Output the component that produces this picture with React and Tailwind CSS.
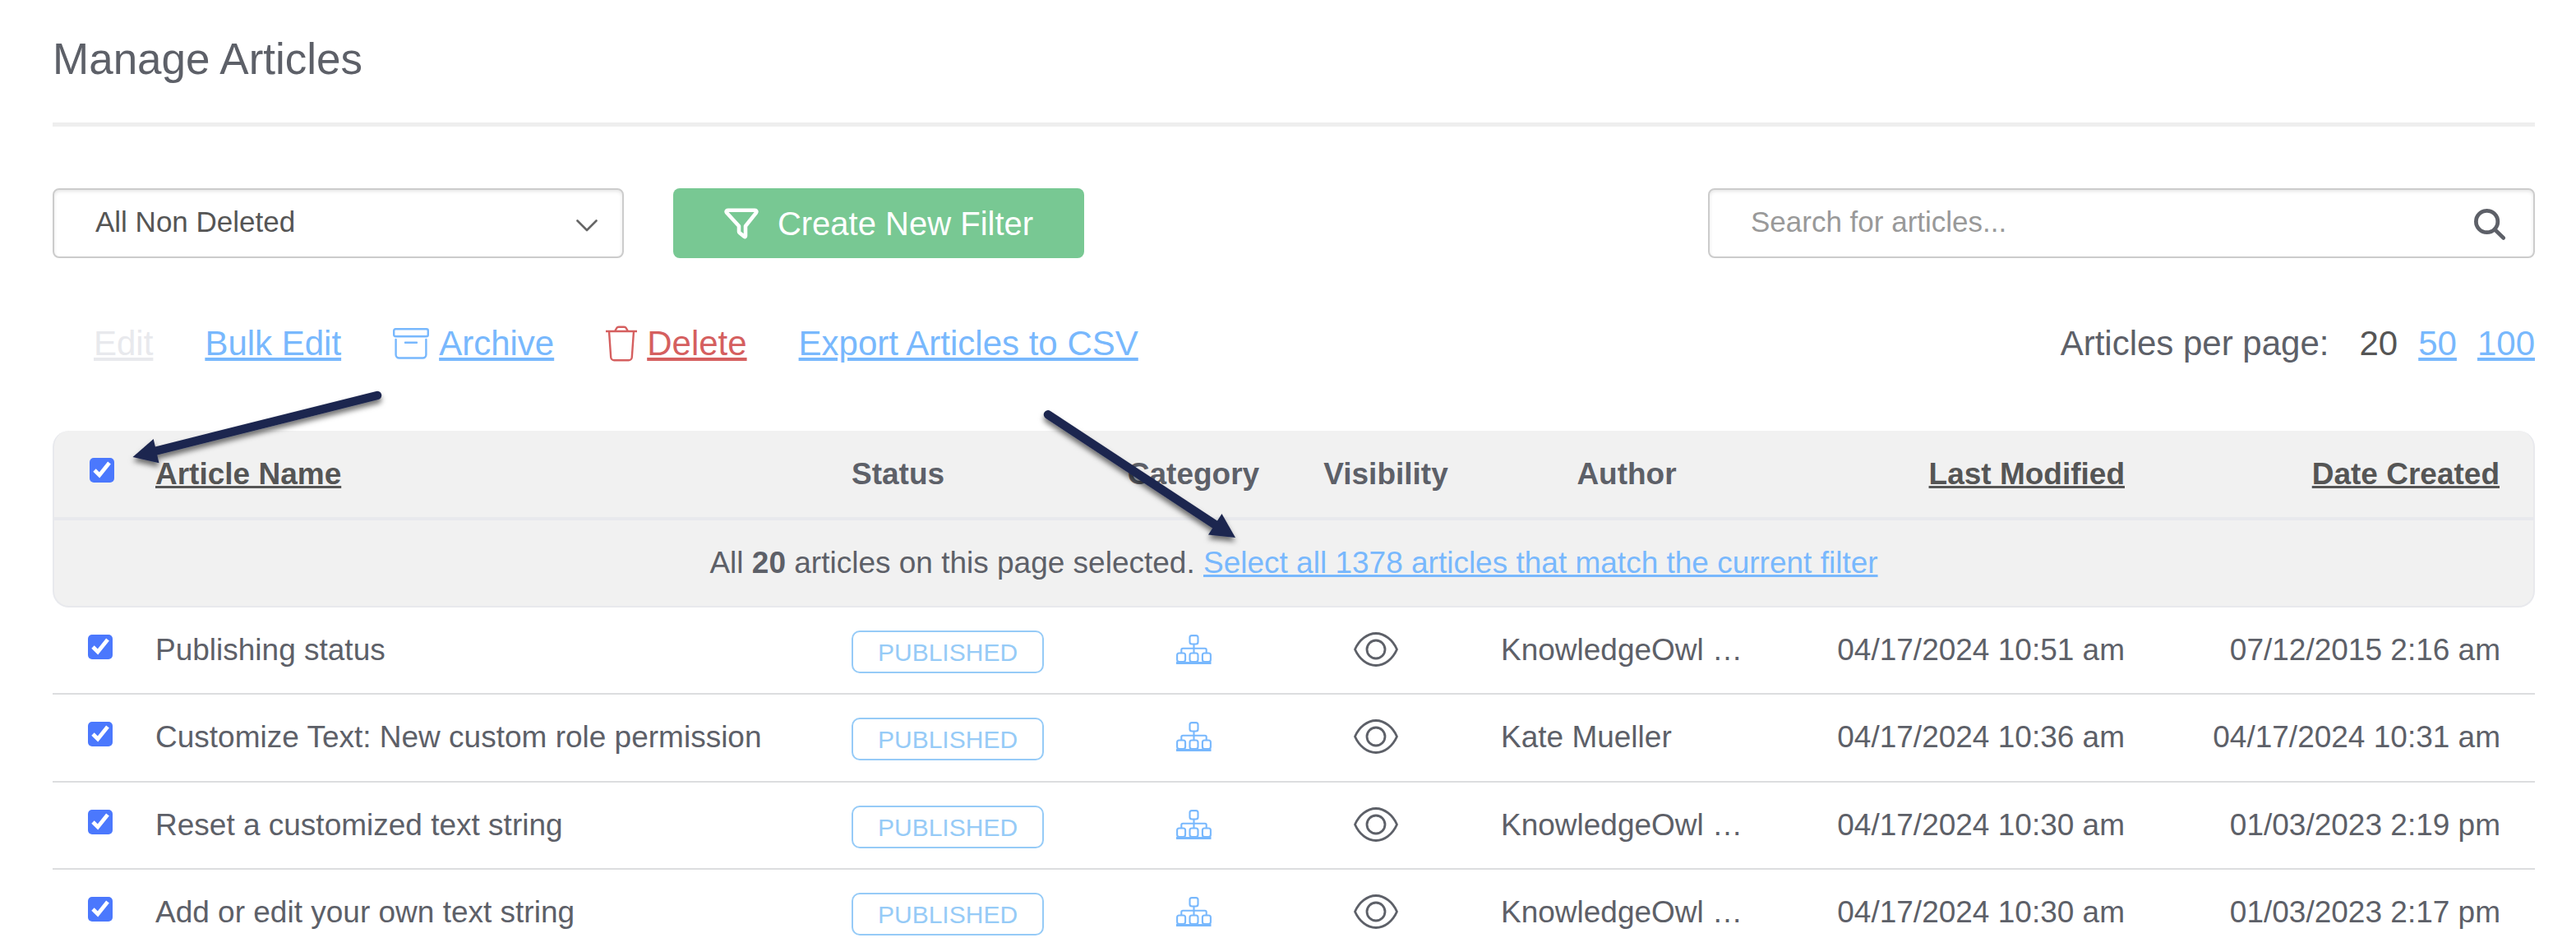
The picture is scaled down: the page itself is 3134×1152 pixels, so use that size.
import React from "react";

const articles = [
  { name: "Publishing status", author: "KnowledgeOwl …", modified: "04/17/2024 10:51 am", created: "07/12/2015 2:16 am" },
  { name: "Customize Text: New custom role permission", author: "Kate Mueller", modified: "04/17/2024 10:36 am", created: "04/17/2024 10:31 am" },
  { name: "Reset a customized text string", author: "KnowledgeOwl …", modified: "04/17/2024 10:30 am", created: "01/03/2023 2:19 pm" },
  { name: "Add or edit your own text string", author: "KnowledgeOwl …", modified: "04/17/2024 10:30 am", created: "01/03/2023 2:17 pm" },
];

const linkBlue = "text-[#78b8fd] underline";

function FilterIcon() {
  return (
    <svg viewBox="0 0 42 38" className="h-[38px] w-[42px]" fill="none" stroke="currentColor" strokeWidth="4.600" strokeLinejoin="round" aria-hidden="true">
      <path d="M4.500 2.800h33c1.800 0 2.400 1.700 1.400 3L26 22v12.300c0 .8-.8 1-1.400.6l-5.800-4.600c-.5-.4-.8-.9-.8-1.500V22L3.100 5.800c-1-1.300-.4-3 1.400-3z" />
    </svg>
  );
}

function SearchIcon() {
  return (
    <svg viewBox="0 0 40 40" className="h-10 w-10" fill="none" stroke="currentColor" aria-hidden="true">
      <circle cx="17.600" cy="17.500" r="13.200" strokeWidth="4.800" />
      <path d="M27 27 37.800 37.500" strokeWidth="4.600" strokeLinecap="round" />
    </svg>
  );
}

function ArchiveIcon() {
  return (
    <svg viewBox="0 0 44 40" className="h-10 w-11" fill="none" stroke="currentColor" strokeWidth="2.400" strokeLinecap="round" aria-hidden="true">
      <rect x="1.200" y="2.200" width="41.600" height="9" rx="2" />
      <path d="M3.600 15v18.500a4 4 0 0 0 4 4h28.800a4 4 0 0 0 4-4V15M15 18.700h14" />
    </svg>
  );
}

function TrashIcon() {
  return (
    <svg viewBox="0 0 38 46" className="h-[46px] w-[38px]" fill="none" stroke="currentColor" strokeWidth="2.400" strokeLinejoin="round" aria-hidden="true">
      <path d="M0 8h38M4 8l2.200 31.500a4 4 0 0 0 4 3.700h17.600a4 4 0 0 0 4-3.700L34 8M11 8l2.300-4c.5-.9 1.300-1.300 2.300-1.300h6.800c1 0 1.800.4 2.300 1.300L27 8" />
    </svg>
  );
}

function SitemapIcon() {
  return (
    <svg viewBox="0 0 43 36" className="h-9 w-[43px]" fill="none" stroke="currentColor" strokeWidth="2.100" aria-hidden="true">
      <rect x="16.500" y="1.100" width="10" height="10.400" rx="2.500" />
      <path d="M21.500 11.500v11M6.300 22.500v-4c0-1 .8-1.800 1.800-1.800h26.800c1 0 1.800.8 1.800 1.800v4" />
      <rect x="1.100" y="22.500" width="10" height="10.500" rx="2.500" />
      <rect x="16.500" y="22.500" width="10" height="10.500" rx="2.500" />
      <rect x="31.900" y="22.500" width="10" height="10.500" rx="2.500" />
      <path d="M0 34.500h42.500" strokeWidth="3" />
    </svg>
  );
}

function EyeIcon() {
  return (
    <svg viewBox="0 0 54 42" className="h-[42px] w-[54px]" fill="none" stroke="currentColor" strokeWidth="2.800" strokeLinejoin="round" aria-hidden="true">
      <path d="M1.500 21C6.500 9.500 16.500 1.500 27 1.500S47.500 9.500 52.500 21C47.500 32.500 37.500 40.500 27 40.500S6.500 32.500 1.500 21z" />
      <circle cx="27" cy="21" r="11" />
    </svg>
  );
}

function Arrows() {
  return (
    <svg viewBox="0 0 1600 700" className="pointer-events-none absolute top-0 left-0 h-[700px] w-[1600px]" fill="#1c264f" stroke="#1c264f" aria-hidden="true">
      <defs>
        <filter id="arrow-shadow" x="-10%" y="-20%" width="120%" height="150%">
          <feDropShadow dx="0" dy="5" stdDeviation="3" floodColor="#000" floodOpacity="0.550" />
        </filter>
      </defs>
      <g filter="url(#arrow-shadow)">
        <path d="M459 481 188 549" strokeWidth="10.500" strokeLinecap="round" />
        <path d="M161.500 556 186.700 534 193.500 563.300z" stroke="none" />
      </g>
      <g filter="url(#arrow-shadow)">
        <path d="M1275 504.300 1478 638" strokeWidth="10.500" strokeLinecap="round" />
        <path d="M1503 654 1486.500 625 1470 650.500z" stroke="none" />
      </g>
    </svg>
  );
}

function Check({ label }) {
  return <input type="checkbox" defaultChecked aria-label={label} className="block size-[30px] accent-[#4b78fd] [clip-path:inset(0_round_5px)]" />;
}

const head = "h-[109px] border-b-4 border-[#e8e9ed] bg-[#f1f1f1] p-0 pt-[31px] align-top font-bold";
const cell = "border-b-2 border-[#dcdddf] p-0 pt-[30px] align-top";

export default function App() {
  return (
    <main className="relative h-screen overflow-hidden bg-white pr-[50px] pl-16 font-['Liberation_Sans',Arial,sans-serif] text-[37px] leading-[44px] text-[#5d6068]">
      <h1 className="pt-[42px] text-[53px] leading-[60px]">Manage Articles</h1>
      <hr className="mt-[47px] border-0 border-t-[5px] border-[#eee]" />

      <form className="mt-[75px] flex items-stretch" onSubmit={(e) => e.preventDefault()}>
        <div className="relative h-[85px] w-[695px]">
          <select aria-label="Article filter" className="h-full w-full appearance-none rounded-lg border-2 border-[#ccc] bg-white pr-20 pb-1 pl-[50px] text-[35px] text-[#555] shadow-[inset_0_2px_4px_rgba(0,0,0,0.1)]">
            <option>All Non Deleted</option>
          </select>
          <svg viewBox="0 0 26 15" className="pointer-events-none absolute top-[38px] right-8 h-[15px] w-[26px]" fill="none" stroke="#666" strokeWidth="2.600" strokeLinecap="round" strokeLinejoin="round" aria-hidden="true">
            <path d="M1.500 1.500 13 13 24.500 1.500" />
          </svg>
        </div>
        <button type="button" className="ml-[60px] flex w-[500px] items-center justify-center gap-[23px] rounded-lg bg-[#78c893] text-[40px] text-white">
          <FilterIcon />
          <span>Create New Filter</span>
        </button>
        <div className="ml-auto flex w-[1006px] items-center rounded-lg border-2 border-[#ccc] pr-[34px] pl-[50px] shadow-[inset_0_2px_4px_rgba(0,0,0,0.1)]">
          <input type="text" aria-label="Search for articles" placeholder="Search for articles..." className="min-w-0 flex-1 pb-1 text-[35px] outline-none placeholder:text-[#999]" />
          <button type="submit" aria-label="Search"><SearchIcon /></button>
        </div>
      </form>

      <div className="mt-20 flex items-center justify-between text-[42px] leading-[48px]">
        <nav className="flex items-center gap-[63px] pl-[50px]" aria-label="Article actions">
          <a href="#edit" className="text-[#e8e9ed] underline">Edit</a>
          <a href="#bulk-edit" className={linkBlue}>Bulk Edit</a>
          <span className="flex items-center gap-3 text-[#78b8fd]">
            <ArchiveIcon />
            <a href="#archive" className="underline">Archive</a>
          </span>
          <span className="flex items-center gap-3 text-[#d55f5f]">
            <TrashIcon />
            <a href="#delete" className="underline">Delete</a>
          </span>
          <a href="#export" className={linkBlue}>Export Articles to CSV</a>
        </nav>
        <div className="flex gap-[25px]">
          <span className="pr-3">Articles per page:</span>
          <span className="text-[#555]">20</span>
          <a href="#50" className={linkBlue}>50</a>
          <a href="#100" className={linkBlue}>100</a>
        </div>
      </div>

      <table className="mt-[82px] w-full table-fixed border-separate border-spacing-0 text-left">
        <colgroup>
          <col className="w-[125px]" />
          <col />
          <col className="w-[330px]" />
          <col className="w-[172px]" />
          <col className="w-[288px]" />
          <col className="w-[306px]" />
          <col className="w-[453px]" />
          <col className="w-[499px]" />
        </colgroup>
        <thead>
          <tr>
            <th className="h-[109px] rounded-tl-[20px] border-b-4 border-l-2 border-[#e8e9ed] bg-[#f1f1f1] p-0 pt-[33px] pl-[43px] align-top"><Check label="Select all articles on this page" /></th>
            <th className={head}><a href="#name" className="text-[#555] underline">Article Name</a></th>
            <th className={head}>Status</th>
            <th className={head + " text-center"}>Category</th>
            <th className={head + " text-center"}><span className="pl-2">Visibility</span></th>
            <th className={head + " text-center"}>Author</th>
            <th className={head + " text-right"}><a href="#modified" className="text-[#555] underline">Last Modified</a></th>
            <th className="h-[109px] rounded-tr-[20px] border-r-2 border-b-4 border-[#e8e9ed] bg-[#f1f1f1] p-0 pt-[31px] pr-[41px] text-right align-top font-bold"><a href="#created" className="text-[#555] underline">Date Created</a></th>
          </tr>
          <tr>
            <td colSpan={8} className="h-[106px] rounded-b-[20px] border-x-2 border-b-2 border-[#e8e9ed] bg-[#f1f1f1] p-0 pt-[30px] text-center align-top">
              All <b>20</b> articles on this page selected.{" "}
              <a href="#select-all" className={linkBlue}>Select all 1378 articles that match the current filter</a>
            </td>
          </tr>
        </thead>
        <tbody>
          {articles.map((a) => (
            <tr key={a.name} className="h-[106px] even:h-[107px]">
              <td className="border-b-2 border-[#dcdddf] p-0 pt-[33px] pl-[43px] align-top"><Check label={"Select " + a.name} /></td>
              <td className={cell}>{a.name}</td>
              <td className="border-b-2 border-[#dcdddf] p-0 pt-7 align-top">
                <span className="block h-[52px] w-fit rounded-[10px] border-2 border-[#96cbf7] px-[30px] text-[30px] leading-[50px] text-[#96cbf7]">PUBLISHED</span>
              </td>
              <td className="border-b-2 border-[#dcdddf] p-0 pt-[33px] align-top">
                <a href="#category" aria-label="Category" className="mx-auto block w-fit text-[#78b8fd]"><SitemapIcon /></a>
              </td>
              <td className="border-b-2 border-[#dcdddf] p-0 pt-[30px] pr-4 align-top"><div className="mx-auto w-fit"><EyeIcon /></div></td>
              <td className={cell}>{a.author}</td>
              <td className={cell + " text-right"}>{a.modified}</td>
              <td className="border-b-2 border-[#dcdddf] p-0 pt-[30px] pr-[42px] text-right align-top">{a.created}</td>
            </tr>
          ))}
        </tbody>
      </table>
      <Arrows />
    </main>
  );
}
